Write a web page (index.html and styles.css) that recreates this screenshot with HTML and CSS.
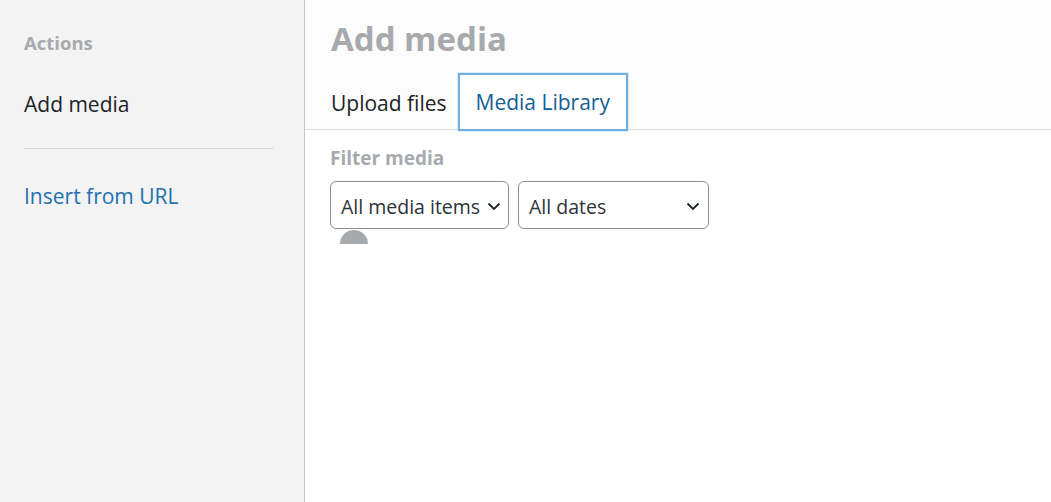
FILE: index.html
```html
<!DOCTYPE html>
<html lang="en">
<head>
    <meta charset="UTF-8">
    <title>Add media</title>
    <link rel="stylesheet" href="styles.css">
</head>
<body>
    <div class="frame">
        <div class="menu">
            <h2 class="menu-heading">Actions</h2>
            <a class="menu-item active">Add media</a>
            <div class="separator"></div>
            <a class="menu-item link">Insert from URL</a>
        </div>
        <div class="content">
            <div class="header">
                <h1 class="title">Add media</h1>
                <div class="router">
                    <span class="tab">Upload files</span>
                    <span class="tab current">Media Library</span>
                </div>
            </div>
            <div class="toolbar">
                <h2 class="filter-label">Filter media</h2>
                <div class="filters">
                    <div class="select wide">
                        <span class="select-text">All media items</span>
                        <svg class="chevron" width="14" height="9" viewBox="0 0 14 9"><path d="M1.5 1.5 L7 7 L12.5 1.5" fill="none" stroke="#1d2327" stroke-width="1.8"/></svg>
                    </div>
                    <div class="select dates">
                        <span class="select-text">All dates</span>
                        <svg class="chevron" width="14" height="9" viewBox="0 0 14 9"><path d="M1.5 1.5 L7 7 L12.5 1.5" fill="none" stroke="#1d2327" stroke-width="1.8"/></svg>
                    </div>
                </div>
                <div class="spinner-wrap"><div class="spinner"></div></div>
            </div>
        </div>
    </div>
</body>
</html>
```

FILE: styles.css
```css
body {
    margin: 0;
    padding: 0;
    font-family: "Open Sans", "Noto Sans", Arial, sans-serif;
    background-color: #fff;
    color: #1d2327;
}
.frame {
    display: flex;
    height: 502px;
}
.menu {
    width: 250px;
    padding: 0 30px 0 24px;
    background-color: #f3f3f3;
    border-right: 1px solid #c3c4c7;
}
.menu-heading {
    margin: 31px 0 0;
    font-size: 18.5px;
    line-height: 24px;
    font-weight: bold;
    color: #a7aaad;
}
.menu-item {
    display: block;
    font-size: 21px;
    line-height: 28px;
}
.menu-item.active {
    margin-top: 35px;
    color: #1d2327;
}
.separator {
    height: 1px;
    background-color: #dcdcde;
    margin: 30px 0 33px;
}
.menu-item.link {
    color: #2271b1;
}
.content {
    flex: 1;
}
.header {
    height: 129px;
    background-color: #fcfcfc;
    border-bottom: 1px solid #dcdcde;
    padding-left: 26px;
}
.title {
    margin: 0;
    padding-top: 17px;
    font-size: 33px;
    line-height: 44px;
    font-weight: bold;
    color: #a7aaad;
}
.router {
    display: flex;
    margin-top: 12px;
}
.tab {
    font-size: 21px;
    line-height: 60px;
    padding: 0 16px;
}
.tab:first-child {
    padding-left: 0;
    padding-right: 11px;
}
.tab.current {
    color: #135e96;
    background-color: #fff;
    border: 2px solid #72aee6;
    box-shadow: 0 0 1px #4f94d4;
    height: 54px;
    line-height: 54px;
}
.toolbar {
    padding-left: 25px;
}
.filter-label {
    margin: 18px 0 0;
    font-size: 19px;
    line-height: 20px;
    font-weight: bold;
    color: #a7aaad;
}
.filters {
    display: flex;
    gap: 9px;
    margin-top: 13px;
}
.select {
    display: flex;
    align-items: center;
    justify-content: space-between;
    height: 44px;
    border: 1px solid #8c8f94;
    border-radius: 6px;
    padding: 2px 8px 0 10px;
    overflow: hidden;
}
.select.wide {
    width: 160px;
    padding-right: 7px;
}
.select.dates {
    width: 171px;
}
.select-text {
    font-size: 19.5px;
    color: #2c3338;
    white-space: nowrap;
}
.wide .chevron {
    margin-left: 2px;
}
.chevron {
    flex: none;
    margin-left: 4px;
}
.spinner-wrap {
    height: 15px;
    overflow: hidden;
    margin-left: 10px;
}
.spinner {
    width: 28px;
    height: 28px;
    border-radius: 50%;
    margin-top: 1px;
    background-color: #a7aaad;
}
```
